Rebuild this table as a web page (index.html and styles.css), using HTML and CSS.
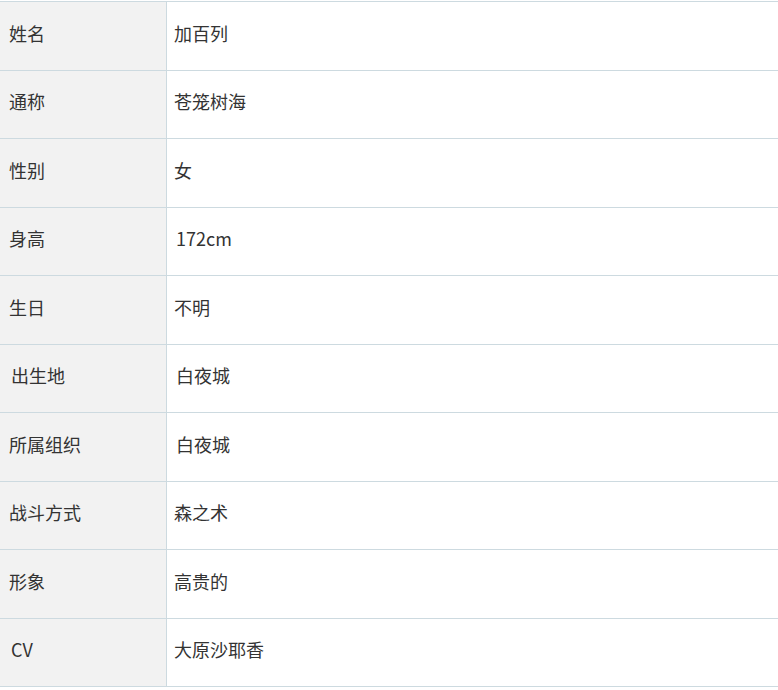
FILE: index.html
```html
<!DOCTYPE html>
<html lang="zh">
<head>
<meta charset="utf-8">
<link rel="stylesheet" href="styles.css">
</head>
<body>
<table class="info">
  <tbody>
    <tr><th>姓名</th><td>加百列</td></tr>
    <tr><th>通称</th><td>苍笼树海</td></tr>
    <tr><th>性别</th><td>女</td></tr>
    <tr><th>身高</th><td class="ind">172cm</td></tr>
    <tr><th>生日</th><td>不明</td></tr>
    <tr><th class="ind">出生地</th><td class="ind">白夜城</td></tr>
    <tr><th>所属组织</th><td class="ind">白夜城</td></tr>
    <tr><th>战斗方式</th><td>森之术</td></tr>
    <tr><th>形象</th><td>高贵的</td></tr>
    <tr><th class="ind">CV</th><td>大原沙耶香</td></tr>
  </tbody>
</table>
</body>
</html>
```
FILE: styles.css
```css
html, body {
  margin: 0;
  padding: 0;
  background: #fff;
}
body {
  padding-top: 1px;
  overflow: hidden;
}
.info {
  border-collapse: collapse;
  margin-left: -1px;
  width: 781px;
  font-family: "Noto Sans CJK SC", "Noto Sans", sans-serif;
  font-size: 18px;
  color: #333;
}
.info th,
.info td {
  border: 1px solid #cddae0;
  height: 61.5px;
  padding: 0 0 6px 9px;
  text-align: left;
  vertical-align: middle;
  font-weight: normal;
}
.info th {
  width: 155px;
  background: #f2f2f2;
}
.info td {
  background: #fff;
  padding-left: 7px;
}
.info th.ind {
  padding-left: 11px;
}
.info td.ind {
  padding-left: 9px;
}
```
